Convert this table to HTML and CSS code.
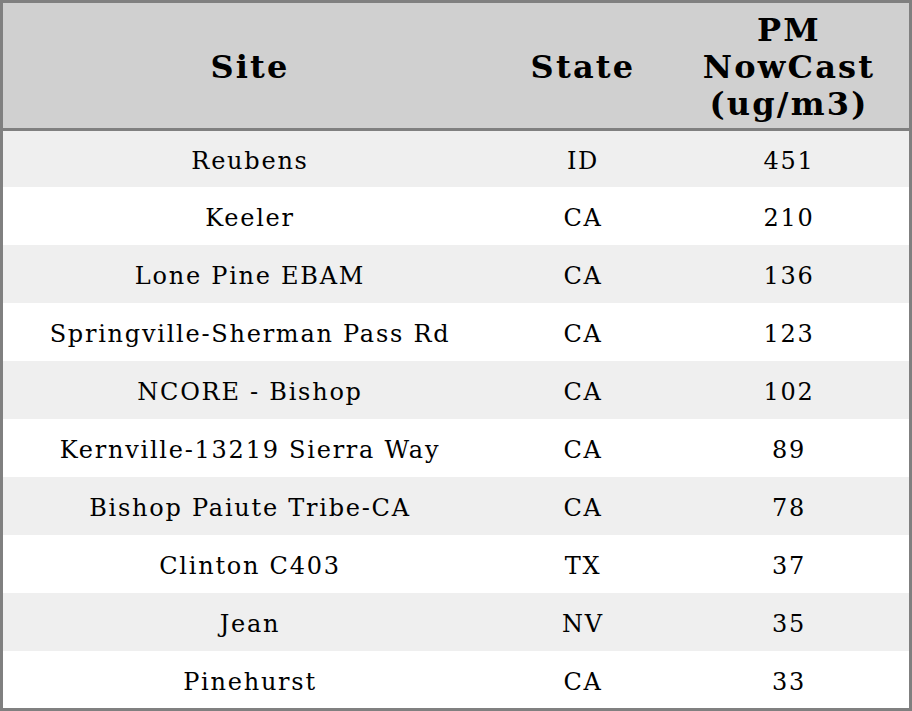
FILE: index.html
```html
<!DOCTYPE html>
<html>
<head>
<meta charset="utf-8">
<link rel="stylesheet" href="styles.css">
</head>
<body>
<table class="data">
  <colgroup>
    <col class="c-site">
    <col class="c-state">
    <col class="c-pm">
  </colgroup>
  <thead>
    <tr><th>Site</th><th>State</th><th>PM<br>NowCast<br>(ug/m3)</th></tr>
  </thead>
  <tbody>
    <tr><td>Reubens</td><td>ID</td><td>451</td></tr>
    <tr><td>Keeler</td><td>CA</td><td>210</td></tr>
    <tr><td>Lone Pine EBAM</td><td>CA</td><td>136</td></tr>
    <tr><td>Springville-Sherman Pass Rd</td><td>CA</td><td>123</td></tr>
    <tr><td>NCORE - Bishop</td><td>CA</td><td>102</td></tr>
    <tr><td>Kernville-13219 Sierra Way</td><td>CA</td><td>89</td></tr>
    <tr><td>Bishop Paiute Tribe-CA</td><td>CA</td><td>78</td></tr>
    <tr><td>Clinton C403</td><td>TX</td><td>37</td></tr>
    <tr><td>Jean</td><td>NV</td><td>35</td></tr>
    <tr><td>Pinehurst</td><td>CA</td><td>33</td></tr>
  </tbody>
</table>
</body>
</html>
```
FILE: styles.css
```css
html, body {
  margin: 0;
  padding: 0;
  background: #ffffff;
}
.data {
  width: 912px;
  height: 711px;
  border-collapse: separate;
  border-spacing: 0;
  border: 3px solid #808080;
  font-family: "DejaVu Serif", serif;
  color: #000;
  table-layout: fixed;
}
.c-site { width: 494px; }
.c-state { width: 172px; }
.c-pm { width: 240px; }
.data th {
  background: #d0d0d0;
  font-size: 32px;
  font-weight: bold;
  letter-spacing: 2.2px;
  line-height: 37px;
  height: 121px;
  padding: 4px 0 0;
  border-bottom: 3px solid #808080;
  text-align: center;
  vertical-align: middle;
}
.data td {
  font-size: 24px;
  letter-spacing: 1.75px;
  height: 54px;
  padding: 4px 0 0;
  text-align: center;
  vertical-align: middle;
}
.data tbody tr:first-child td {
  height: 52px;
}
.data tbody tr:last-child td {
  height: 53px;
}
.data tbody tr:nth-child(odd) td {
  background: #efefef;
}
```
